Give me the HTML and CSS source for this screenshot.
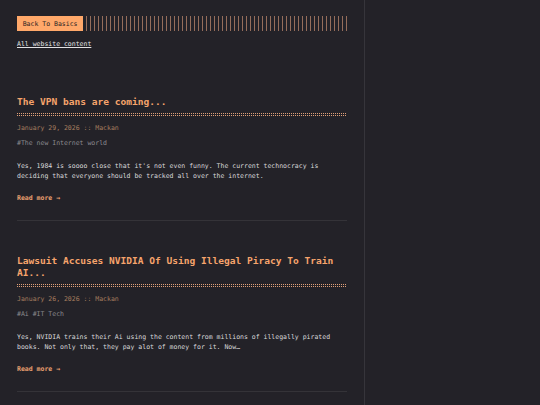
FILE: index.html
```html
<!DOCTYPE html>
<html lang="en">
<head>
<meta charset="utf-8">
<title>Back To Basics</title>
<link rel="stylesheet" href="styles.css">
</head>
<body>
<div class="container">
  <header class="header">
    <div class="header-top">
      <a class="logo" href="#">Back To Basics</a>
      <span class="stripes"></span>
    </div>
    <nav class="menu"><a href="#">All website content</a></nav>
  </header>
  <main class="posts">
    <article class="post">
      <h2 class="post-title"><a href="#">The VPN bans are coming...</a></h2>
      <div class="dots"></div>
      <div class="post-meta">January 29, 2026 :: Mackan</div>
      <div class="post-tags">#The new Internet world</div>
      <p class="post-content">Yes, 1984 is soooo close that it's not even funny. The current technocracy is deciding that everyone should be tracked all over the internet.</p>
      <a class="read-more" href="#">Read more →</a>
    </article>
    <article class="post">
      <h2 class="post-title"><a href="#">Lawsuit Accuses NVIDIA Of Using Illegal Piracy To Train AI...</a></h2>
      <div class="dots"></div>
      <div class="post-meta">January 26, 2026 :: Mackan</div>
      <div class="post-tags">#Ai #IT Tech</div>
      <p class="post-content">Yes, NVIDIA trains their Ai using the content from millions of illegally pirated books. Not only that, they pay alot of money for it. Now…</p>
      <a class="read-more" href="#">Read more →</a>
    </article>
  </main>
</div>
</body>
</html>
```
FILE: styles.css
```css
html, body {
  margin: 0;
  padding: 0;
  background: #232228;
  color: #d6d6d8;
  font-family: "DejaVu Sans Mono", "Liberation Mono", monospace;
  font-size: 6.5px;
  line-height: 10px;
}
a { color: inherit; text-decoration: none; }
.container {
  width: 330px;
  min-height: 405px;
  box-sizing: content-box;
  padding: 16px 17px 0 17px;
  border-right: 1px solid rgba(255, 255, 255, 0.09);
}
.header-top {
  display: flex;
  align-items: stretch;
  gap: 3px;
  height: 15px;
}
.logo {
  display: flex;
  align-items: center;
  padding: 0 5.7px;
  background: #ffa86a;
  color: #2a2424;
  white-space: nowrap;
}
.stripes {
  flex: 1;
  background: repeating-linear-gradient(90deg, rgba(225, 160, 125, 0.6) 0 1px, transparent 1px 4px);
}
.menu {
  margin-top: 8px;
}
.menu a {
  color: #e2e2e4;
  text-decoration: underline;
  text-underline-offset: 1px;
}
.posts {
  margin-top: 47px;
}
.post {
  border-bottom: 1px solid rgba(255, 255, 255, 0.08);
  padding-bottom: 17px;
  margin-bottom: 34px;
}
.post-title {
  margin: 0;
  font-size: 9.55px;
  line-height: 12px;
  font-weight: bold;
  color: #f6a46c;
}
.dots {
  margin-top: 5px;
  height: 4px;
  background:
    repeating-linear-gradient(180deg, transparent 0 1px, #232228 1px 2px),
    repeating-linear-gradient(90deg, #e0a078 0 1px, transparent 1px 2px);
}
.post-meta {
  margin-top: 6px;
  color: #a57d5f;
}
.post-tags {
  margin-top: 5px;
  color: #8a8a8e;
}
.post-content {
  margin: 13px 0 0 0;
  color: #d8d8da;
}
.read-more {
  display: inline-block;
  margin-top: 12px;
  font-weight: bold;
  color: #e8a070;
}
```
